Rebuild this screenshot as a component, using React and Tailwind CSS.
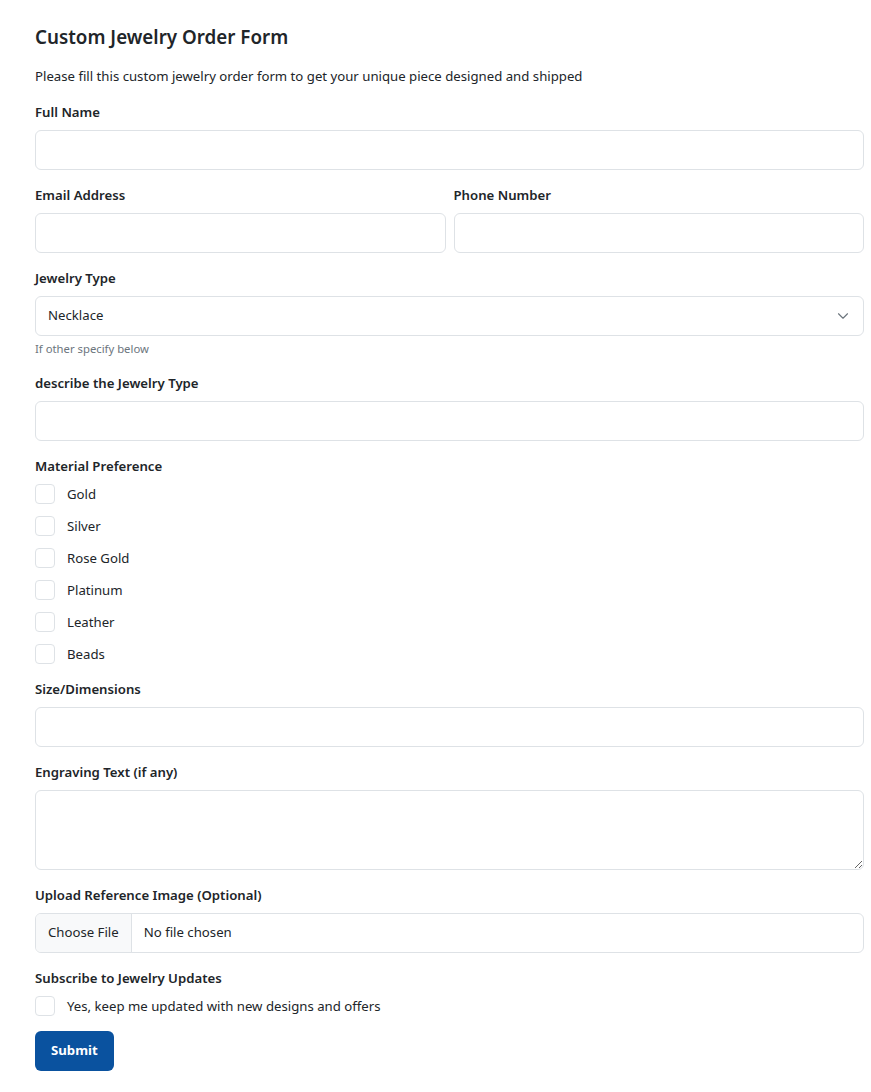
import React, { useState } from "react";

const font = { fontFamily: '"Noto Sans", "Open Sans", Arial, sans-serif' };

const Label = ({ children }) => (
  <label className="block pt-[1px] text-[13.2px] leading-[21px] font-semibold text-[#212529] mb-[7px]">
    {children}
  </label>
);

const TextInput = ({ type = "text" }) => (
  <input
    type={type}
    className="block w-full h-10 px-3 bg-white border border-[#dee2e6] rounded-[6px] text-[13.2px] text-[#212529] outline-none"
  />
);

const Check = ({ label, checked, onChange }) => (
  <label className="flex items-center h-6 cursor-pointer">
    <input
      type="checkbox"
      checked={checked}
      onChange={onChange}
      className="appearance-none w-5 h-5 border border-[#dee2e6] rounded-[4px] bg-white checked:bg-[#0a529f] checked:border-[#0a529f] shrink-0"
    />
    <span className="ml-3 text-[13.2px] leading-[21px] text-[#212529]">{label}</span>
  </label>
);

const materials = ["Gold", "Silver", "Rose Gold", "Platinum", "Leather", "Beads"];

export default function App() {
  const [picked, setPicked] = useState({});
  const [subscribe, setSubscribe] = useState(false);
  const [type, setType] = useState("Necklace");

  const toggle = (m) => setPicked({ ...picked, [m]: !picked[m] });

  return (
    <div className="min-h-screen bg-white text-[#212529]" style={font}>
      <form className="pl-[35px] pr-[7px] pt-[25px] pb-5" onSubmit={(e) => e.preventDefault()}>
        <h1 className="text-[18.8px] leading-[24px] font-semibold">Custom Jewelry Order Form</h1>
        <p className="mt-[17px] text-[13.2px] leading-[21px]">
          Please fill this custom jewelry order form to get your unique piece designed and shipped
        </p>

        <div className="mt-[14px] mb-[14px]">
          <Label>Full Name</Label>
          <TextInput />
        </div>

        <div className="grid grid-cols-2 gap-2 mb-[14px]">
          <div>
            <Label>Email Address</Label>
            <TextInput type="email" />
          </div>
          <div>
            <Label>Phone Number</Label>
            <TextInput type="tel" />
          </div>
        </div>

        <div className="mb-[14px]">
          <Label>Jewelry Type</Label>
          <div className="relative">
            <select
              value={type}
              onChange={(e) => setType(e.target.value)}
              className="appearance-none block w-full h-10 pl-3 pr-10 bg-white border border-[#dee2e6] rounded-[6px] text-[13.2px] text-[#212529] outline-none"
            >
              <option>Necklace</option>
              <option>Ring</option>
              <option>Bracelet</option>
              <option>Earrings</option>
              <option>Other</option>
            </select>
            <svg
              className="absolute right-[15px] top-[14px] pointer-events-none"
              width="12"
              height="12"
              viewBox="0 0 16 16"
              fill="none"
              stroke="#6c757d"
              strokeWidth="1.5"
              strokeLinecap="round"
              strokeLinejoin="round"
            >
              <path d="M2 5l6 6 6-6" />
            </svg>
          </div>
          <div className="mt-1 text-[11.3px] leading-[18px] text-[#6c757d]">If other specify below</div>
        </div>

        <div className="mb-[14px]">
          <Label>describe the Jewelry Type</Label>
          <TextInput />
        </div>

        <div className="mb-[12px]">
          <label className="block pt-[1px] text-[13.2px] leading-[21px] font-semibold mb-[5px]">Material Preference</label>
          <div className="flex flex-col gap-2">
            {materials.map((m) => (
              <Check key={m} label={m} checked={!!picked[m]} onChange={() => toggle(m)} />
            ))}
          </div>
        </div>

        <div className="mb-[14px]">
          <Label>Size/Dimensions</Label>
          <TextInput />
        </div>

        <div className="mb-[14px]">
          <Label>Engraving Text (if any)</Label>
          <textarea className="block w-full h-20 px-3 py-2 bg-white border border-[#dee2e6] rounded-[6px] text-[13.2px] outline-none" />
        </div>

        <div className="mb-[14px]">
          <Label>Upload Reference Image (Optional)</Label>
          <label className="flex w-full h-10 border border-[#dee2e6] rounded-[6px] overflow-hidden cursor-pointer text-[13.2px]">
            <span className="flex items-center px-3 bg-[#f8f9fa] border-r border-[#dee2e6]">Choose File</span>
            <span className="flex items-center pl-3">No file chosen</span>
            <input type="file" className="hidden" />
          </label>
        </div>

        <div>
          <label className="block pt-[1px] text-[13.2px] leading-[21px] font-semibold mb-[5px]">Subscribe to Jewelry Updates</label>
          <Check
            label="Yes, keep me updated with new designs and offers"
            checked={subscribe}
            onChange={() => setSubscribe(!subscribe)}
          />
        </div>

        <button
          type="submit"
          className="mt-[13px] h-10 px-4 rounded-[6px] bg-[#0a529f] text-white text-[13.2px] font-bold"
        >
          Submit
        </button>
      </form>
    </div>
  );
}
